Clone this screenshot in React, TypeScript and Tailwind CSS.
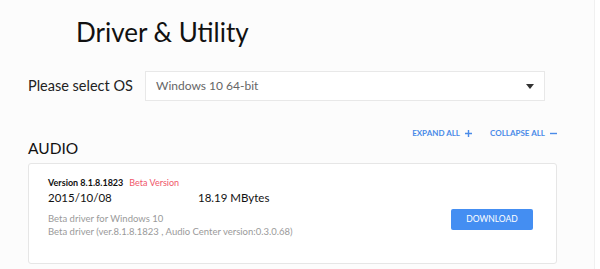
import React from "react";

export default function App() {
  return (
    <div className="w-[600px] h-[269px] flex overflow-hidden" style={{ fontFamily: 'Lato, "Noto Sans", sans-serif' }}>
      <div className="w-[594px] shrink-0 bg-[#fcfcfc] pl-[28px] pr-[37px]">
        <div className="pt-[14px] pl-[48px] h-[62px]">
          <h1 className="text-[26px] leading-[36px] text-[#111] font-normal whitespace-nowrap">Driver &amp; Utility</h1>
        </div>
        <div className="flex items-center mt-[9px] pr-[12px]">
          <div className="w-[117px] text-[14.5px] text-[#222] whitespace-nowrap">Please select OS</div>
          <div className="flex-1 h-[30px] border border-[#e8e8e8] bg-white flex items-center justify-between pl-[10px] pr-[10px]">
            <span className="text-[12px] text-[#666]">Windows 10 64-bit</span>
            <svg width="8" height="5" viewBox="0 0 8 5"><path d="M0 0H8L4 5Z" fill="#333" /></svg>
          </div>
        </div>
        <div className="flex justify-end items-center h-[12px] mt-[26px] gap-[18px] text-[8px] font-bold text-[#4a8be8]">
          <div className="flex items-center gap-[5px]">
            <span>EXPAND ALL</span>
            <svg width="7" height="7" viewBox="0 0 7 7"><path d="M3.5 0V7M0 3.5H7" stroke="#4a8be8" strokeWidth="1.4" /></svg>
          </div>
          <div className="flex items-center gap-[5px]">
            <span>COLLAPSE ALL</span>
            <svg width="7" height="7" viewBox="0 0 7 7"><path d="M0 3.5H7" stroke="#4a8be8" strokeWidth="1.4" /></svg>
          </div>
        </div>
        <div className="text-[15.5px] leading-[20px] text-[#111] -mt-[1px]">AUDIO</div>
        <div className="mt-[5px] h-[101px] border border-[#e6e6e6] rounded-[3px] bg-white pl-[19px] pr-[23px] pt-[13px] flex justify-between">
          <div>
            <div className="flex items-baseline gap-[6px] text-[9px] leading-[12px]">
              <span className="font-bold text-[#111]">Version 8.1.8.1823</span>
              <span className="text-[#f0566a]">Beta Version</span>
            </div>
            <div className="flex text-[11.5px] leading-[17px] text-[#111]">
              <span className="w-[150px]">2015/10/08</span>
              <span>18.19 MBytes</span>
            </div>
            <div className="mt-[6px] text-[9.5px] leading-[13px] text-[#9a9a9a]">
              <div>Beta driver for Windows 10</div>
              <div>Beta driver (ver.8.1.8.1823 , Audio Center version:0.3.0.68)</div>
            </div>
          </div>
          <div className="pt-[32px]">
            <button className="block w-[82px] h-[21px] rounded-[2px] bg-[#448ef2] text-white text-[8.5px] leading-[21px]">DOWNLOAD</button>
          </div>
        </div>
      </div>
      <div className="flex-1 bg-white border-l border-[#f0f0f0]" />
    </div>
  );
}
